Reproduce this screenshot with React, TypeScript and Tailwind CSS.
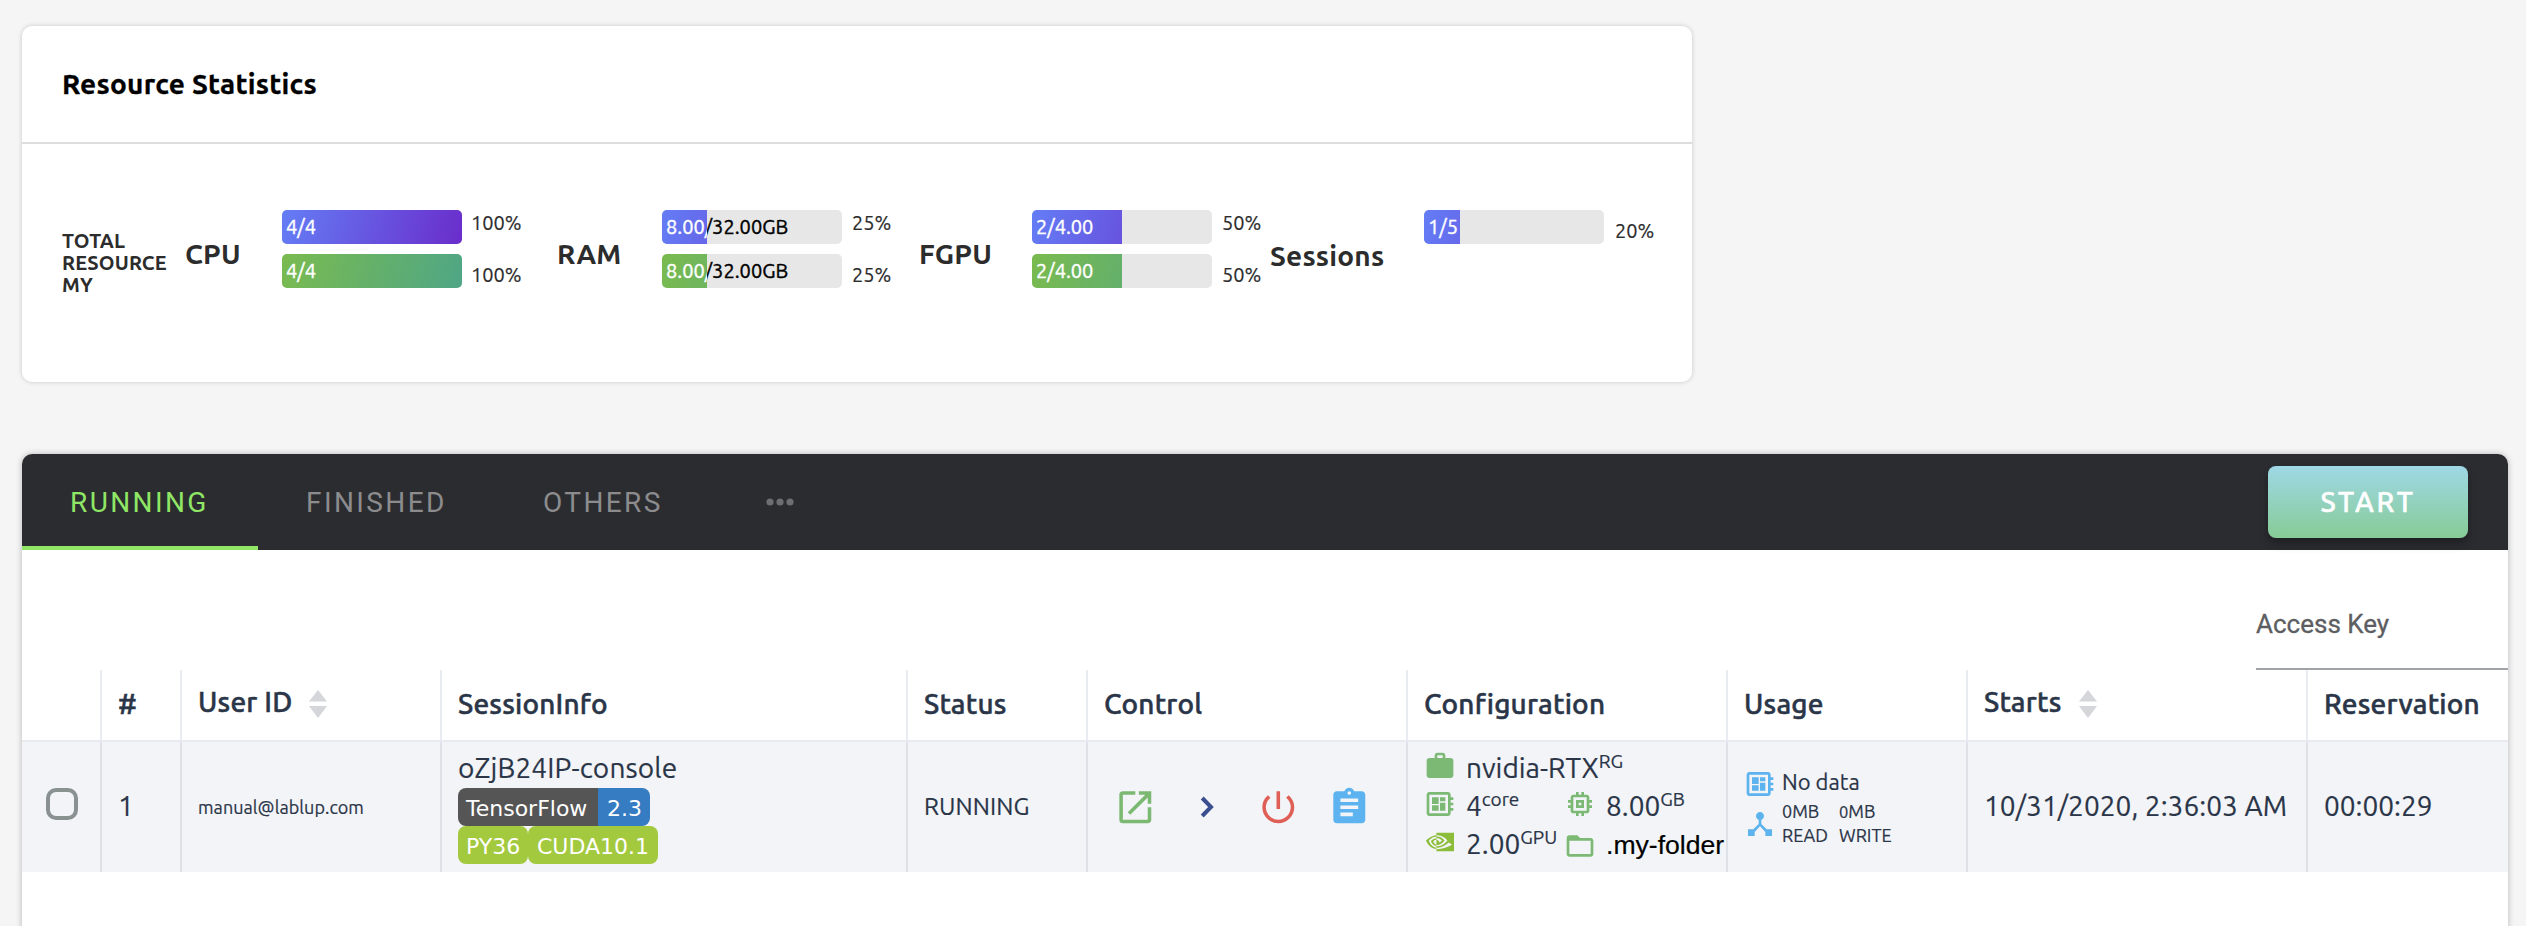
import React from "react";
import {
  MdOpenInNew,
  MdPowerSettingsNew,
  MdAssignment,
  MdWork,
  MdDeveloperBoard,
  MdMemory,
  MdFolderOpen,
  MdDeviceHub,
} from "react-icons/md";
import { SiNvidia } from "react-icons/si";

type BarProps = { label: string; percent: number; tone: "total" | "mine" };

function Bar({ label, percent, tone }: BarProps) {
  const fill =
    tone === "total"
      ? "bg-[linear-gradient(105deg,#647df5,#6a2dcb)]"
      : "bg-[linear-gradient(105deg,#7abb4f,#4fa685)]";
  return (
    <div className="relative h-[34px] w-[180px] overflow-hidden rounded-[5px] bg-[#e7e7e7] text-[20px] leading-[33px] whitespace-nowrap [-webkit-text-stroke:0.4px]">
      <div className="pl-[4px] text-black">{label}</div>
      <div
        className={`absolute inset-0 pl-[4px] text-white ${fill}`}
        style={{ clipPath: `inset(0 ${100 - percent}% 0 0)` }}
      >
        {label}
      </div>
    </div>
  );
}

type GaugeProps = {
  name: string;
  nameWidth: string;
  width: string;
  label: string;
  percent: number;
};

function Gauge({ name, nameWidth, width, label, percent }: GaugeProps) {
  return (
    <div className={`flex shrink-0 ${width}`}>
      <div className={`shrink-0 pt-[40px] text-[28px] leading-[28px] font-bold tracking-[0.2px] ${nameWidth}`}>{name}</div>
      <div className="flex flex-col gap-[10px] pt-[10px]">
        <Bar label={label} percent={percent} tone="total" />
        <Bar label={label} percent={percent} tone="mine" />
      </div>
      <div className={`text-[20px] leading-[52px] [-webkit-text-stroke:0.2px] ${percent === 100 ? "pl-[9px]" : "pl-[10px]"}`}>
        <div className="-mt-[3px]">{percent}%</div>
        <div>{percent}%</div>
      </div>
    </div>
  );
}

function Sorter() {
  return (
    <svg width="18" height="28" viewBox="0 0 18 28" className="ml-[17px] fill-[#d4d6da]">
      <path d="M9 0 18 11.5H0ZM0 16H18L9 28Z" />
    </svg>
  );
}

const columns = [
  { title: "", width: "w-[80px]" },
  { title: "#", width: "w-[80px]" },
  { title: "User ID", width: "w-[260px]", sort: true },
  { title: "SessionInfo", width: "w-[466px]" },
  { title: "Status", width: "w-[180px]" },
  { title: "Control", width: "w-[320px]" },
  { title: "Configuration", width: "w-[320px]" },
  { title: "Usage", width: "w-[240px]" },
  { title: "Starts", width: "w-[340px]", sort: true },
  { title: "Reservation", width: "w-[200px]" },
];

function Cell({ width, className = "", children }: { width: string; className?: string; children: React.ReactNode }) {
  return (
    <div className={`flex h-[130px] shrink-0 border-[#dfe1e8] not-last:border-r-2 ${width} ${className}`}>{children}</div>
  );
}

function Sup({ children }: { children: React.ReactNode }) {
  return <span className="relative -top-[10px] text-[19px]">{children}</span>;
}

export default function App() {
  return (
    <div className="flex h-[926px] w-[2526px] flex-col overflow-hidden bg-[#f5f5f5] pt-[26px] pl-[22px] font-['Ubuntu','Noto_Sans',sans-serif] text-[#2c2c2c]">
      <section className="h-[356px] w-[1670px] shrink-0 rounded-[10px] bg-white shadow-[0_0_5px_rgba(0,0,0,0.18)]">
        <h3 className="flex h-[118px] items-center border-b-2 border-[#ddd] pl-[40px] text-[28px] font-bold tracking-[0.25px] text-black [-webkit-text-stroke:0.3px]">
          Resource Statistics
        </h3>
        <div className="flex pt-[56px] pl-[40px]">
          <div className="w-[123px] shrink-0 pt-[30px] text-[20px] leading-[22px] font-bold tracking-[0.15px]">
            <div>TOTAL</div>
            <div>RESOURCE</div>
            <div>MY</div>
          </div>
          <Gauge name="CPU" nameWidth="w-[97px]" width="w-[372px]" label="4/4" percent={100} />
          <Gauge name="RAM" nameWidth="w-[105px]" width="w-[362px]" label="8.00/32.00GB" percent={25} />
          <Gauge name="FGPU" nameWidth="w-[113px]" width="w-[351px]" label="2/4.00" percent={50} />
          <div className="w-[154px] shrink-0 pt-[42px] text-[28px] leading-[28px] font-bold tracking-[0.2px]">Sessions</div>
          <div className="pt-[10px]">
            <Bar label="1/5" percent={20} tone="total" />
          </div>
          <div className="pt-[20px] pl-[11px] text-[20px] leading-[22px] [-webkit-text-stroke:0.2px]">20%</div>
        </div>
      </section>

      <section className="mt-[72px] h-[500px] w-[2486px] shrink-0 rounded-t-[10px] bg-white shadow-[0_0_6px_rgba(0,0,0,0.25)]">
        <nav className="flex h-[96px] rounded-t-[10px] bg-[#2b2c30] font-['Roboto',sans-serif] text-[28px] leading-[97px] font-normal tracking-[2.4px] text-[#8c8c8e]">
          <div className="w-[236px] border-b-4 border-[#8fe765] pl-[48px] text-[#8fe765]">RUNNING</div>
          <div className="w-[236px] pl-[48px]">FINISHED</div>
          <div className="w-[220px] pl-[49px]">OTHERS</div>
          <div className="flex items-center pl-[52px]">
            <svg width="28" height="8" viewBox="0 0 28 8" className="fill-[#6d6e71]">
              <circle cx="4" cy="4" r="3.6" />
              <circle cx="14" cy="4" r="3.6" />
              <circle cx="24" cy="4" r="3.6" />
            </svg>
          </div>
          <button className="mt-[12px] mr-[40px] ml-auto h-[72px] w-[200px] rounded-[8px] bg-[linear-gradient(180deg,#9fd8e6,#87cb96)] pb-[1px] font-['Ubuntu','Noto_Sans',sans-serif] text-[28px] leading-[71px] font-medium tracking-[2.6px] text-white shadow-[0_6px_10px_rgba(0,0,0,0.28)] [-webkit-text-stroke:0.5px]">
            START
          </button>
        </nav>

        <div className="flex h-[120px] justify-end">
          <div className="h-[120px] w-[252px] border-b-2 border-[#a0a4a8] pt-[58px] font-['Roboto',sans-serif] text-[26px] leading-[32px] text-[#5c5e61] [-webkit-text-stroke:0.3px]">
            Access Key
          </div>
        </div>

        <div className="flex h-[72px] border-b-2 border-[#e8eaf0] text-[28px] font-medium tracking-[0.2px] text-[#2a3548] [-webkit-text-stroke:0.5px]">
          {columns.map((c) => (
            <div
              key={c.title}
              className={`flex h-[70px] shrink-0 items-center border-[#e8ebf1] pl-[16px] not-last:border-r-2 ${c.width} ${c.sort ? "pb-[7px]" : "pb-[3px]"}`}
            >
              {c.title}
              {c.sort && (
                <div className="pt-[4px]">
                  <Sorter />
                </div>
              )}
            </div>
          ))}
        </div>

        <div className="flex h-[130px] bg-[#f3f4f7] text-[28px] whitespace-nowrap text-[#2a3548] [-webkit-text-stroke:0.2px]">
          <Cell width="w-[80px]" className="pt-[46px] pl-[24px]">
            <div className="h-[32px] w-[32px] rounded-[10px] border-4 border-[#8a9291]" />
          </Cell>
          <Cell width="w-[80px]" className="items-center pb-[2px] pl-[16px]">1</Cell>
          <Cell width="w-[260px]" className="items-center pl-[16px] text-[18px] tracking-[0.05px]">manual@lablup.com</Cell>
          <Cell width="w-[466px]" className="flex-col items-start pt-[5px] pl-[16px]">
            <div className="h-[41px] leading-[41px] tracking-[0.15px]">oZjB24IP-console</div>
            <div className="flex h-[38px] overflow-hidden rounded-[8px] font-['DejaVu_Sans',sans-serif] text-[22px] leading-[41px] text-white [-webkit-text-stroke:0]">
              <span className="w-[140px] bg-[#555] pl-[8px]">TensorFlow</span>
              <span className="w-[52px] bg-[#357cc2] pl-[9px]">2.3</span>
            </div>
            <div className="flex h-[38px] font-['DejaVu_Sans',sans-serif] text-[22px] leading-[41px] text-white [-webkit-text-stroke:0]">
              <span className="h-[38px] w-[70px] rounded-[8px] bg-[#a3c93f] pl-[8px]">PY36</span>
              <span className="h-[38px] w-[130px] rounded-[8px] bg-[#a3c93f] pl-[9px]">CUDA10.1</span>
            </div>
          </Cell>
          <Cell width="w-[180px]" className="items-center pl-[16px] text-[24px] tracking-[0.1px]">RUNNING</Cell>
          <Cell width="w-[320px]" className="items-center pl-[26px]">
            <MdOpenInNew size={42.6} className="text-[#7bb872]" />
            <svg width="14" height="22" viewBox="0 0 14 22" className="ml-[43px] fill-none stroke-[#3b4e8f]">
              <path d="M2.2 2 11 11 2.2 20" strokeWidth="4" />
            </svg>
            <MdPowerSettingsNew size={42.6} className="ml-[43px] text-[#df5f56]" />
            <MdAssignment size={42.6} className="ml-[28.4px] text-[#5db3f0]" />
          </Cell>
          <Cell width="w-[320px]" className="flex-col pt-[6px] pl-[16px] leading-[38px]">
            <div className="flex h-[38px]">
              <MdWork size={32} className="mt-[2px] mr-[10px] text-[#7cb975]" />
              <div className="pt-[1px]">nvidia-RTX<Sup>RG</Sup></div>
            </div>
            <div className="flex h-[38px]">
              <MdDeveloperBoard size={32} className="mt-[2px] mr-[10px] text-[#7cb975]" />
              <div className="w-[98px] pt-[1px]">4<Sup>core</Sup></div>
              <MdMemory size={32} className="mt-[2px] mr-[10px] text-[#7cb975]" />
              <div className="pt-[1px]">8.00<Sup>GB</Sup></div>
            </div>
            <div className="flex h-[38px]">
              <SiNvidia size={28} className="mt-[4px] mr-[12px] ml-[2px] text-[#8bbd3a]" />
              <div className="w-[98px] pt-[1px]">2.00<Sup>GPU</Sup></div>
              <MdFolderOpen size={32} className="mt-[6px] mr-[10px] text-[#7cb975]" />
              <div className="pt-[2px] font-['Liberation_Sans',sans-serif] text-[26.6px] text-black">.my-folder</div>
            </div>
          </Cell>
          <Cell width="w-[240px]" className="flex-col pt-[26px] pl-[16px]">
            <div className="flex h-[32px]">
              <MdDeveloperBoard size={32} className="mr-[6px] text-[#5cb3ee]" />
              <div className="text-[22px] leading-[28px]">No data</div>
            </div>
            <div className="flex pt-[1px] text-[18px] leading-[24px]">
              <MdDeviceHub size={32} className="mt-[7px] mr-[6px] text-[#5cb3ee]" />
              <div className="-mt-[2px] w-[57px]">
                <div>0MB</div>
                <div>READ</div>
              </div>
              <div className="-mt-[2px]">
                <div className="h-[24px]"><span className="text-[16.5px]">0</span>MB</div>
                <div>WRITE</div>
              </div>
            </div>
          </Cell>
          <Cell width="w-[340px]" className="items-center pb-[3px] pl-[16px] tracking-[0.05px]">10/31/2020, 2:36:03 AM</Cell>
          <Cell width="w-[200px]" className="items-center pb-[3px] pl-[16px]">00:00:29</Cell>
        </div>
      </section>
    </div>
  );
}
